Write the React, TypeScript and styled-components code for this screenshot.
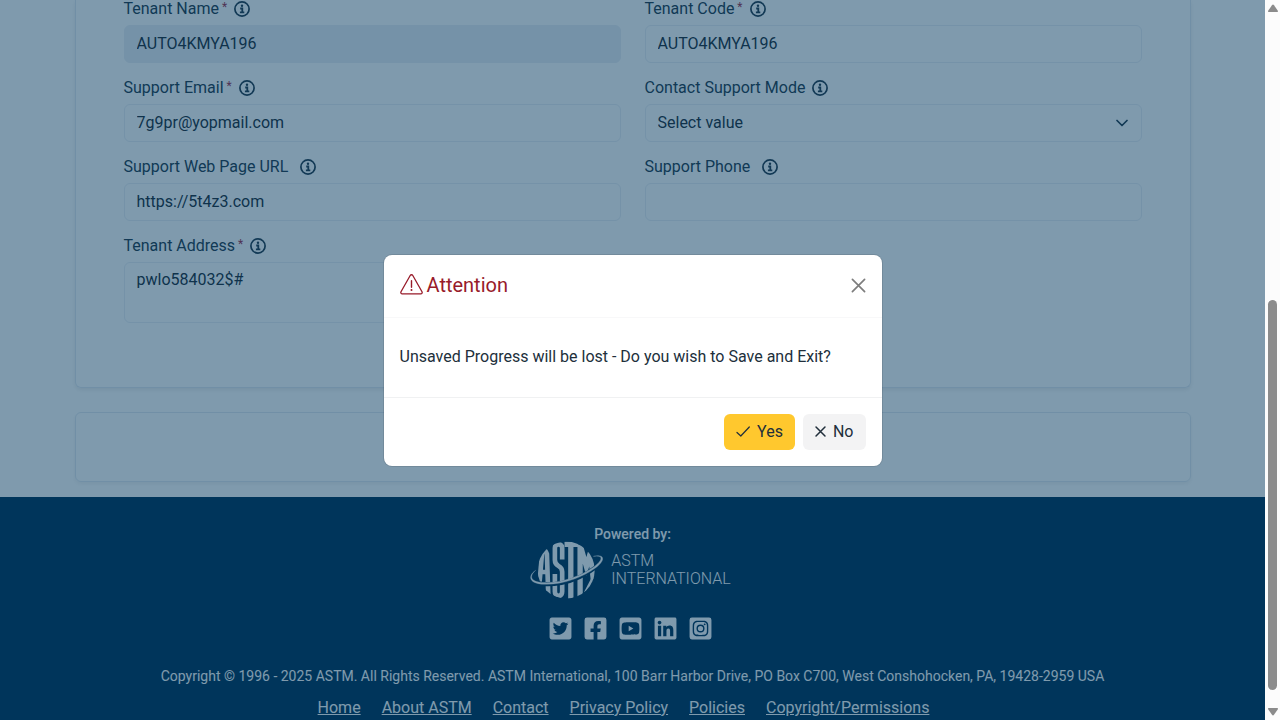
import React from "react";
import styled, { createGlobalStyle } from "styled-components";
import {
  FaTwitterSquare,
  FaFacebookSquare,
  FaYoutubeSquare,
  FaLinkedin,
  FaInstagramSquare,
} from "react-icons/fa";

const GlobalStyle = createGlobalStyle`
  *, *::before, *::after { box-sizing: border-box; }
  body {
    margin: 0;
    background: #fff;
    color: #212f3b;
    font-family: Roboto, "Liberation Sans", sans-serif;
    font-size: 16px;
    line-height: 24px;
    overflow: hidden;
  }
  button, input, select, textarea { font: inherit; color: inherit; }
`;

const Screen = styled.div`
  display: flex;
  height: 100vh;
  overflow: hidden;
`;

const Viewport = styled.div`
  position: relative;
  flex: 1;
  min-width: 0;
  overflow: hidden;
`;

const Main = styled.main`
  display: flex;
  flex-direction: column;
  gap: 24px;
  max-width: 1140px;
  margin: 0 auto;
  padding: 0 12px 15px;
`;

const FormCard = styled.form`
  padding: 0 48px 64px;
  border: 1px solid #e2e8f0;
  border-top: 0;
  border-radius: 0 0 6px 6px;
  box-shadow: 0 2px 4px rgba(0, 0, 0, 0.08);
`;

const EmptyCard = styled.section`
  height: 70px;
  border: 1px solid #e2e8f0;
  border-radius: 6px;
  box-shadow: 0 2px 4px rgba(0, 0, 0, 0.06);
`;

const FieldGrid = styled.div`
  display: grid;
  grid-template-columns: 1fr 1fr;
  gap: 16px 24px;
`;

const Field = styled.div`
  display: flex;
  flex-direction: column;
  gap: 7px;
`;

const LabelRow = styled.div<{ $wide?: boolean }>`
  display: flex;
  align-items: center;
  gap: ${(p) => (p.$wide ? 12 : 7)}px;
  height: 18px;
  color: #243c4e;
`;

const Required = styled.span`
  color: #a0304c;
  font-size: 12px;
  line-height: 12px;
  vertical-align: 3px;
`;

const controlHeight = 38;

const TextInput = styled.input`
  width: 100%;
  height: ${controlHeight}px;
  padding: 0 12px 2px;
  border: 1px solid #eaeef5;
  border-radius: 6px;
  background: #fff;
  outline: 0;
  &:disabled {
    background: #ebeff4;
    opacity: 1;
  }
`;

const SelectWrap = styled.div`
  display: grid;
  align-items: center;
  > * { grid-area: 1 / 1; }
  > svg {
    justify-self: end;
    margin-right: 14px;
    pointer-events: none;
  }
`;

const Select = styled.select`
  appearance: none;
  width: 100%;
  height: ${controlHeight}px;
  padding: 0 36px 0 12px;
  border: 1px solid #eaeef5;
  border-radius: 6px;
  background: #fff;
`;

const TextArea = styled.textarea`
  display: block;
  width: 100%;
  height: 61px;
  padding: 5px 12px;
  border: 1px solid #eaeef5;
  border-radius: 6px;
  background: #fff;
  resize: none;
`;

const Footer = styled.footer`
  display: flex;
  flex-direction: column;
  align-items: center;
  min-height: 260px;
  padding: 25px 16px;
  background: #00355b;
  color: #fff;
`;

const FooterText = styled.p<{ $strong?: boolean }>`
  margin: 0;
  font-size: 14px;
  line-height: 24px;
  font-weight: ${(p) => (p.$strong ? 500 : 400)};
`;

const Brand = styled.a`
  display: flex;
  align-items: center;
  gap: 8px;
  height: 58px;
  margin: -5px 4px 0 0;
  color: #fff;
  text-decoration: none;
`;

const BrandName = styled.span`
  font-weight: 300;
  line-height: 18px;
`;

const Socials = styled.div`
  display: flex;
  gap: 10px;
  margin: 17px 4px 23px 0;
  a { display: flex; color: #fff; }
`;

const FooterLinks = styled.nav`
  display: flex;
  gap: 21px;
  margin-top: 8px;
  padding-right: 18px;
  a { color: #fff; }
`;

const Overlay = styled.div`
  position: absolute;
  inset: 0;
  display: flex;
  align-items: center;
  justify-content: center;
  background: rgba(0, 53, 91, 0.5);
`;

const Dialog = styled.div`
  width: 100%;
  max-width: 498px;
  border-radius: 8px;
  background: #fff;
  box-shadow: 0 0 0 1px rgba(0, 0, 0, 0.1);
`;

const DialogHeader = styled.header`
  display: flex;
  align-items: center;
  justify-content: space-between;
  height: 63px;
  padding: 0 16px 2px;
  border-bottom: 1px solid #f8f8f9;
`;

const DialogTitle = styled.h2`
  display: flex;
  align-items: center;
  gap: 4px;
  margin: 0;
  color: #981b2a;
  font-size: 20px;
  font-weight: 400;
`;

const CloseButton = styled.button`
  display: flex;
  padding: 2px 0 0;
  border: 0;
  background: none;
  color: #7d7d7d;
`;

const DialogBody = styled.p`
  margin: 0;
  padding: 27px 16px 28px;
`;

const DialogFooter = styled.footer`
  display: flex;
  justify-content: flex-end;
  gap: 8px;
  padding: 16px;
  border-top: 1px solid #f0f1f2;
`;

const DialogButton = styled.button<{ $primary?: boolean }>`
  display: flex;
  align-items: center;
  gap: 7px;
  height: 36px;
  padding: 0 12px;
  border: 0;
  border-radius: 6px;
  background: ${(p) => (p.$primary ? "#ffc82e" : "#f3f3f4")};
`;

const Scrollbar = styled.div`
  display: flex;
  flex-direction: column;
  align-items: center;
  gap: 6px;
  width: 15px;
  padding: 4px 0;
  background: #fcfcfc;
`;

const Track = styled.div`
  display: flex;
  flex: 1;
  flex-direction: column;
  justify-content: flex-end;
  padding-bottom: 12px;
`;

const Thumb = styled.div`
  width: 9px;
  height: 58%;
  border-radius: 5px;
  background: #8b8b8b;
`;

const InfoIcon = () => (
  <svg width="16" height="16" viewBox="0 0 16 16" fill="none" aria-hidden="true">
    <circle cx="8" cy="8" r="7.1" stroke="currentColor" strokeWidth="1.7" />
    <circle cx="8" cy="4.8" r="1.2" fill="currentColor" />
    <path d="M6.200 7.500H8.300V11.200M5.900 11.400H10.300" stroke="currentColor" strokeWidth="1.800" />
  </svg>
);

const WarningIcon = () => (
  <svg width="23" height="21" viewBox="0 0 23 21" fill="none" stroke="currentColor" aria-hidden="true">
    <path
      d="M10.2 1.5a1.5 1.5 0 0 1 2.6 0l9.2 16.3c.5 1-.1 2.1-1.2 2.1H2.2C1.1 19.900 .5 18.800 1 17.800Z"
      strokeWidth="1.3"
      strokeLinejoin="round"
    />
    <path d="M11.500 6.700v6.600" strokeWidth="1.4" strokeLinecap="round" />
    <circle cx="11.500" cy="16.100" r="1" fill="currentColor" stroke="none" />
  </svg>
);

const CrossIcon = ({ size, weight }: { size: number; weight: number }) => (
  <svg width={size} height={size} viewBox="0 0 16 16" stroke="currentColor" strokeWidth={weight} strokeLinecap="round" aria-hidden="true">
    <path d="M1.500 1.500l13 13M14.500 1.500l-13 13" />
  </svg>
);

const CheckIcon = () => (
  <svg width="14" height="11" viewBox="0 0 14 11" fill="none" stroke="currentColor" strokeWidth="1.200" strokeLinecap="round" strokeLinejoin="round" aria-hidden="true">
    <path d="M1 6.500l3.800 3.500L13.300 1" />
  </svg>
);

const ChevronIcon = () => (
  <svg width="12" height="8" viewBox="0 0 12 8" fill="none" stroke="#243c4e" strokeWidth="1.700" strokeLinecap="round" strokeLinejoin="round" aria-hidden="true">
    <path d="M1 1.500l5 5 5-5" />
  </svg>
);

const ArrowIcon = ({ down }: { down?: boolean }) => (
  <svg width="10" height="8" viewBox="0 0 10 8" fill="#8b8b8b" aria-hidden="true">
    <path d={down ? "M.5 0h9q.8.5.2 1.500L6 6.800q-1 1.300-2 0L.3 1.500Q-.3.5.5 0Z" : "M.5 8h9q.8-.5.2-1.500L6 1.200q-1-1.300-2 0L.3 6.500Q-.3 7.500.5 8Z"} />
  </svg>
);

const Emblem = () => (
  <svg width="73" height="60" viewBox="30 60 220 180" fill="none" stroke="#fff" aria-hidden="true">
    <defs>
      <clipPath id="globe">
        <circle cx="139" cy="150" r="86" />
      </clipPath>
    </defs>
    <g clipPath="url(#globe)" strokeWidth="14">
      <path d="M59 185L66 102Q73 80 81 102L85 224M63 156H83" />
      <path d="M127 118V84Q127 73 116 73T105 84V120Q105 132 116 138T127 155V215Q127 228 116 228T105 215V162" />
      <path d="M134 73H176M153 70V240" strokeWidth="16" />
      <path d="M181 240V74L200 140L212 98L221 180" strokeWidth="16" />
      <path d="M224 174L200 220" strokeWidth="16" />
    </g>
    <path d="M40 185Q70 199 125 189T232 139" stroke="#00355b" strokeWidth="12" />
    <path
      d="M47 151C24 171 34 187 73 188C126 190 188 166 223 140C250 120 252 104 221 109C252 101 262 117 227 144C192 170 130 195 74 193C26 192 22 168 47 151Z"
      fill="#fff"
      strokeWidth="1"
    />
  </svg>
);

type FieldLabelProps = { id: string; text: string; required?: boolean; wide?: boolean };

const FieldLabel = ({ id, text, required, wide }: FieldLabelProps) => (
  <LabelRow $wide={wide}>
    <label htmlFor={id}>
      {text}
      {required && <Required> *</Required>}
    </label>
    <InfoIcon />
  </LabelRow>
);

const footerLinks = ["Home", "About ASTM", "Contact", "Privacy Policy", "Policies", "Copyright/Permissions"];

const socials = [
  { name: "Twitter", Icon: FaTwitterSquare },
  { name: "Facebook", Icon: FaFacebookSquare },
  { name: "YouTube", Icon: FaYoutubeSquare },
  { name: "LinkedIn", Icon: FaLinkedin },
  { name: "Instagram", Icon: FaInstagramSquare },
];

export default function App() {
  return (
    <Screen>
      <GlobalStyle />
      <Viewport>
        <Main>
          <FormCard>
            <FieldGrid>
              <Field>
                <FieldLabel id="name" text="Tenant Name" required />
                <TextInput id="name" defaultValue="AUTO4KMYA196" disabled />
              </Field>
              <Field>
                <FieldLabel id="code" text="Tenant Code" required />
                <TextInput id="code" defaultValue="AUTO4KMYA196" />
              </Field>
              <Field>
                <FieldLabel id="email" text="Support Email" required />
                <TextInput id="email" type="email" defaultValue="7g9pr@yopmail.com" />
              </Field>
              <Field>
                <FieldLabel id="mode" text="Contact Support Mode" />
                <SelectWrap>
                  <Select id="mode">
                    <option>Select value</option>
                  </Select>
                  <ChevronIcon />
                </SelectWrap>
              </Field>
              <Field>
                <FieldLabel id="url" text="Support Web Page URL" wide />
                <TextInput id="url" defaultValue="https://5t4z3.com" />
              </Field>
              <Field>
                <FieldLabel id="phone" text="Support Phone" wide />
                <TextInput id="phone" type="tel" />
              </Field>
              <Field>
                <FieldLabel id="address" text="Tenant Address" required />
                <TextArea id="address" defaultValue="pwlo584032$#" />
              </Field>
            </FieldGrid>
          </FormCard>
          <EmptyCard />
        </Main>

        <Footer>
          <FooterText $strong>Powered by:</FooterText>
          <Brand href="#">
            <Emblem />
            <BrandName>
              ASTM
              <br />
              INTERNATIONAL
            </BrandName>
          </Brand>
          <Socials>
            {socials.map(({ name, Icon }) => (
              <a key={name} href="#" aria-label={name}>
                <Icon size={25} />
              </a>
            ))}
          </Socials>
          <FooterText>
            Copyright © 1996 - 2025 ASTM. All Rights Reserved. ASTM International, 100 Barr Harbor Drive, PO Box C700, West
            Conshohocken, PA, 19428-2959 USA
          </FooterText>
          <FooterLinks>
            {footerLinks.map((text) => (
              <a key={text} href="#">
                {text}
              </a>
            ))}
          </FooterLinks>
        </Footer>

        <Overlay>
          <Dialog role="dialog" aria-modal="true" aria-labelledby="dialog-title">
            <DialogHeader>
              <DialogTitle id="dialog-title">
                <WarningIcon />
                Attention
              </DialogTitle>
              <CloseButton type="button" aria-label="Close">
                <CrossIcon size={15} weight={1.8} />
              </CloseButton>
            </DialogHeader>
            <DialogBody>Unsaved Progress will be lost - Do you wish to Save and Exit?</DialogBody>
            <DialogFooter>
              <DialogButton type="button" $primary>
                <CheckIcon />
                Yes
              </DialogButton>
              <DialogButton type="button">
                <CrossIcon size={11} weight={2.2} />
                No
              </DialogButton>
            </DialogFooter>
          </Dialog>
        </Overlay>
      </Viewport>
      <Scrollbar aria-hidden="true">
        <ArrowIcon />
        <Track>
          <Thumb />
        </Track>
        <ArrowIcon down />
      </Scrollbar>
    </Screen>
  );
}
